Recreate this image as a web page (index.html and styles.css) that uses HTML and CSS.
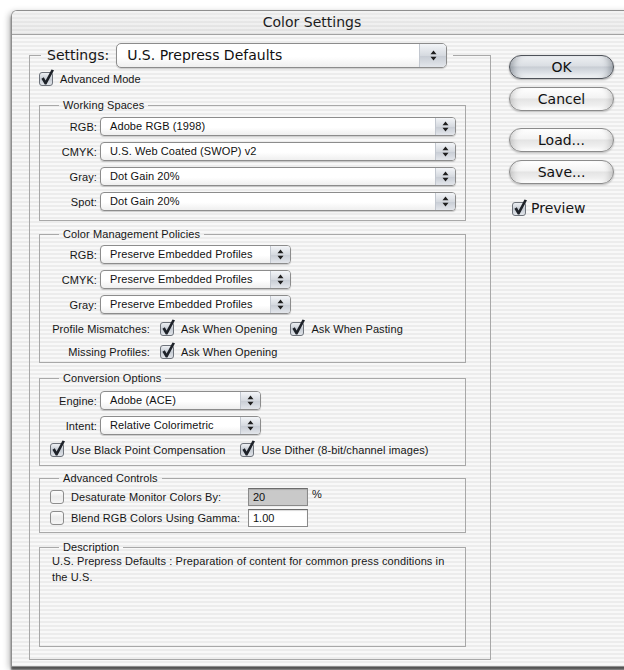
FILE: index.html
```html
<!DOCTYPE html>
<html lang="en">
<head>
<meta charset="utf-8">
<title>Color Settings</title>
<link rel="stylesheet" href="styles.css">
</head>
<body>
<svg class="defs" width="0" height="0" aria-hidden="true">
  <defs>
    <linearGradient id="cb-on-fill" x1="0" y1="0" x2="0" y2="1">
      <stop offset="0" stop-color="#f1f3f6"/>
      <stop offset="0.5" stop-color="#c6ccd4"/>
      <stop offset="1" stop-color="#e3e6eb"/>
    </linearGradient>
    <linearGradient id="cb-off-fill" x1="0" y1="0" x2="0" y2="1">
      <stop offset="0" stop-color="#ffffff"/>
      <stop offset="0.5" stop-color="#ebebeb"/>
      <stop offset="1" stop-color="#f7f7f7"/>
    </linearGradient>
    <symbol id="cb-on" viewBox="0 0 16 17">
      <rect x="0.5" y="3.5" width="13" height="13" rx="2.5" fill="url(#cb-on-fill)" stroke="#6e737b"/>
      <path d="M2.4 9.8 4.8 8.3 6.6 11.6 12.5 0.5 15 1.3 7.4 15.4 5.8 15.4Z" fill="#1e2229"/>
    </symbol>
    <symbol id="cb-off" viewBox="0 0 16 17">
      <rect x="0.5" y="3.5" width="13" height="13" rx="2.5" fill="url(#cb-off-fill)" stroke="#8d8d8d"/>
    </symbol>
    <symbol id="updown" viewBox="0 0 7 11">
      <path d="M3.5 0.5 6.5 4.3H0.5Z M3.5 10.5 6.5 6.7H0.5Z" fill="#1f1f1f"/>
    </symbol>
  </defs>
</svg>

<div class="window">
  <header class="titlebar"><h1 class="title">Color Settings</h1></header>

  <div class="content">
    <fieldset class="settings">
      <legend class="settings-legend">
        <span class="settings-label">Settings:</span>
        <span class="popup popup-large"><span class="popup-text">U.S. Prepress Defaults</span><span class="popup-arrows"><svg class="updown"><use href="#updown"/></svg></span></span>
      </legend>

      <label class="check advanced-mode"><svg class="cb"><use href="#cb-on"/></svg><span>Advanced Mode</span></label>

      <fieldset class="group working-spaces">
        <legend>Working Spaces</legend>
        <div class="field-grid">
          <span class="field-label">RGB:</span>
          <span class="popup popup-wide"><span class="popup-text">Adobe RGB (1998)</span><span class="popup-arrows"><svg class="updown"><use href="#updown"/></svg></span></span>
          <span class="field-label">CMYK:</span>
          <span class="popup popup-wide"><span class="popup-text">U.S. Web Coated (SWOP) v2</span><span class="popup-arrows"><svg class="updown"><use href="#updown"/></svg></span></span>
          <span class="field-label">Gray:</span>
          <span class="popup popup-wide"><span class="popup-text">Dot Gain 20%</span><span class="popup-arrows"><svg class="updown"><use href="#updown"/></svg></span></span>
          <span class="field-label">Spot:</span>
          <span class="popup popup-wide"><span class="popup-text">Dot Gain 20%</span><span class="popup-arrows"><svg class="updown"><use href="#updown"/></svg></span></span>
        </div>
      </fieldset>

      <fieldset class="group policies">
        <legend>Color Management Policies</legend>
        <div class="field-grid">
          <span class="field-label">RGB:</span>
          <span class="popup popup-policy"><span class="popup-text">Preserve Embedded Profiles</span><span class="popup-arrows"><svg class="updown"><use href="#updown"/></svg></span></span>
          <span class="field-label">CMYK:</span>
          <span class="popup popup-policy"><span class="popup-text">Preserve Embedded Profiles</span><span class="popup-arrows"><svg class="updown"><use href="#updown"/></svg></span></span>
          <span class="field-label">Gray:</span>
          <span class="popup popup-policy"><span class="popup-text">Preserve Embedded Profiles</span><span class="popup-arrows"><svg class="updown"><use href="#updown"/></svg></span></span>
        </div>
        <div class="policy-row policy-mismatch">
          <span class="field-label">Profile Mismatches:</span>
          <label class="check"><svg class="cb"><use href="#cb-on"/></svg><span>Ask When Opening</span></label>
          <label class="check"><svg class="cb"><use href="#cb-on"/></svg><span>Ask When Pasting</span></label>
        </div>
        <div class="policy-row policy-missing">
          <span class="field-label">Missing Profiles:</span>
          <label class="check"><svg class="cb"><use href="#cb-on"/></svg><span>Ask When Opening</span></label>
        </div>
      </fieldset>

      <fieldset class="group conversion">
        <legend>Conversion Options</legend>
        <div class="field-grid">
          <span class="field-label">Engine:</span>
          <span class="popup popup-engine"><span class="popup-text">Adobe (ACE)</span><span class="popup-arrows"><svg class="updown"><use href="#updown"/></svg></span></span>
          <span class="field-label">Intent:</span>
          <span class="popup popup-engine"><span class="popup-text">Relative Colorimetric</span><span class="popup-arrows"><svg class="updown"><use href="#updown"/></svg></span></span>
        </div>
        <div class="check-row">
          <label class="check"><svg class="cb"><use href="#cb-on"/></svg><span>Use Black Point Compensation</span></label>
          <label class="check"><svg class="cb"><use href="#cb-on"/></svg><span>Use Dither (8-bit/channel images)</span></label>
        </div>
      </fieldset>

      <fieldset class="group advanced-controls">
        <legend>Advanced Controls</legend>
        <div class="control-row">
          <label class="check"><svg class="cb"><use href="#cb-off"/></svg><span>Desaturate Monitor Colors By:</span></label>
          <input class="field field-disabled" type="text" value="20" readonly>
          <span class="unit">%</span>
        </div>
        <div class="control-row">
          <label class="check"><svg class="cb"><use href="#cb-off"/></svg><span>Blend RGB Colors Using Gamma:</span></label>
          <input class="field" type="text" value="1.00" readonly>
        </div>
      </fieldset>

      <fieldset class="group description">
        <legend>Description</legend>
        <p>U.S. Prepress Defaults : Preparation of content for common press conditions in the U.S.</p>
      </fieldset>
    </fieldset>

    <div class="side">
      <button class="aqua aqua-default" type="button">OK</button>
      <button class="aqua btn-cancel" type="button">Cancel</button>
      <button class="aqua btn-load" type="button">Load...</button>
      <button class="aqua btn-save" type="button">Save...</button>
      <label class="check preview"><svg class="cb"><use href="#cb-on"/></svg><span>Preview</span></label>
    </div>
  </div>
</div>
</body>
</html>
```

FILE: styles.css
```css
* { box-sizing: border-box; }

html, body { margin: 0; }

body {
  width: 624px;
  height: 670px;
  overflow: hidden;
  background: #fff;
  font-family: "Liberation Sans", Arial, sans-serif;
  font-size: 11px;
  letter-spacing: 0.1px;
  color: #161616;
}

.defs { display: block; width: 0; height: 0; overflow: hidden; }

/* ---------- window frame ---------- */
.window {
  margin: 10px 0 0 11px;
  width: 640px;
  height: 657px;
  border: 1px solid #8e8e8e;
  border-right: none;
  border-radius: 6px 0 0 0;
  background: repeating-linear-gradient(180deg, #f8f8f8 0 2px, #ececec 2px 4px);
  box-shadow: -2px 2px 6px rgba(0, 0, 0, 0.28), 0 3px 2px rgba(0, 0, 0, 0.6);
  overflow: hidden;
}

.titlebar {
  height: 24px;
  border-bottom: 1px solid #a2a2a2;
  background:
    linear-gradient(rgba(255, 255, 255, 0.35), rgba(255, 255, 255, 0)),
    repeating-linear-gradient(180deg, #ededed 0 2px, #e1e1e1 2px 4px);
}

.title {
  margin: 0;
  width: 600px;
  font: 400 14px/23px "DejaVu Sans", sans-serif;
  letter-spacing: 0;
  text-align: center;
  color: #1d1d1d;
}

.content {
  display: flex;
  align-items: flex-start;
  padding-left: 17px;
}

/* ---------- group boxes ---------- */
fieldset {
  margin: 0;
  padding: 0;
  border: 1px solid #a8a8a8;
  min-width: 0;
}

legend {
  padding: 0 4px;
  margin-left: 19px;
  line-height: 12px;
}

.settings {
  width: 462px;
  margin-top: 8px;
  padding: 3px 0 12px 0;
}

.settings > .check,
.settings > .group { margin-left: 9px; }

.settings-legend {
  display: flex;
  align-items: center;
  gap: 7px;
  height: 25px;
  margin-left: 11px;
  padding: 0 6px;
}

.settings-label {
  font: 14px/17px "DejaVu Sans", sans-serif;
  letter-spacing: 0;
}

.group { width: 427px; }

.working-spaces { margin-top: 12px; padding: 6px 0 9px; }
.policies { margin-top: 7px; padding: 5px 0 1px; }
.conversion { margin-top: 9px; padding: 7px 0 7px; }
.advanced-controls { margin-top: 6px; padding: 4px 0 5px; }
.description { margin-top: 8px; }

.field-grid {
  display: grid;
  grid-template-columns: 57px auto;
  column-gap: 3px;
  row-gap: 6px;
  align-items: center;
  justify-items: start;
}

.field-label { text-align: right; white-space: nowrap; }
.field-grid .field-label { justify-self: end; }

/* ---------- popup menus ---------- */
.popup {
  display: flex;
  height: 19px;
  border: 1px solid #8c8c8c;
  border-radius: 4px;
  background: linear-gradient(#ffffff 0, #ffffff 55%, #efefef 100%);
  box-shadow: 0 1px 1px rgba(0, 0, 0, 0.18);
  overflow: hidden;
  color: #111;
}

.popup-text {
  flex: 1;
  padding-left: 9px;
  line-height: 17px;
  white-space: nowrap;
}

.popup-arrows {
  flex: none;
  width: 20px;
  display: flex;
  align-items: center;
  justify-content: center;
  border-left: 1px solid #c2c7cf;
  background: linear-gradient(#f3f5f8, #d6dae0 50%, #c7ccd4 51%, #e3e6eb);
}

.updown { width: 7px; height: 11px; }

.popup-large {
  width: 331px;
  height: 25px;
  border-radius: 5px;
  font: 14px/23px "DejaVu Sans", sans-serif;
  letter-spacing: 0;
}

.popup-large .popup-text { padding-left: 10px; line-height: 23px; }
.popup-large .popup-arrows { width: 27px; }

.popup-wide { width: 356px; }
.popup-policy { width: 191px; }
.popup-engine { width: 161px; }

/* ---------- checkboxes ---------- */
.check {
  display: flex;
  align-items: center;
  gap: 5px;
  white-space: nowrap;
}

.cb {
  flex: none;
  width: 16px;
  height: 17px;
  margin-top: -3px;
}

.advanced-mode { height: 16px; }

.policy-row {
  display: flex;
  align-items: center;
  height: 18px;
}

.policy-row .field-label { width: 110px; margin-right: 10px; }
.policy-row .check + .check { margin-left: 13px; }
.policy-mismatch { margin-top: 6px; }
.policy-missing { margin-top: 5px; }

.check-row {
  display: flex;
  align-items: center;
  gap: 15px;
  height: 16px;
  margin-top: 7px;
  padding-left: 10px;
}

/* ---------- advanced controls ---------- */
.control-row {
  display: flex;
  align-items: center;
  height: 18px;
  padding-left: 10px;
}

.control-row + .control-row { margin-top: 3px; }
.control-row .check { width: 198px; }

.field {
  width: 60px;
  height: 18px;
  margin: 0;
  padding: 0 4px;
  border: 1px solid #8a8a8a;
  border-top-color: #6c6c6c;
  border-radius: 0;
  background: #fff;
  box-shadow: inset 0 1px 1px rgba(0, 0, 0, 0.15);
  font: inherit;
  color: #111;
  outline: none;
}

.field-disabled { background: #c9c9c9; }

.unit { margin-left: 4px; align-self: flex-start; line-height: 12px; }

/* ---------- description ---------- */
.description p {
  margin: 0;
  height: 93px;
  padding: 0 8px 0 12px;
  line-height: 16px;
  letter-spacing: 0.1px;
}

/* ---------- push buttons ---------- */
.side {
  display: flex;
  flex-direction: column;
  width: 105px;
  margin-left: 18px;
  margin-top: 20px;
}

.aqua {
  width: 105px;
  height: 24px;
  padding: 0;
  border: 1px solid #8b8b8b;
  border-radius: 12px;
  background: linear-gradient(#ffffff 0%, #f3f3f3 45%, #e4e4e4 50%, #efefef 78%, #ffffff 100%);
  box-shadow: 0 1px 2px rgba(0, 0, 0, 0.25),
    inset 7px 0 6px -5px rgba(0, 0, 0, 0.18),
    inset -7px 0 6px -5px rgba(0, 0, 0, 0.18);
  font: 14px/22px "DejaVu Sans", sans-serif;
  color: #111;
}

.aqua-default {
  border-color: #4f535a;
  background: linear-gradient(#eef0f3 0%, #dadee3 45%, #c8cdd4 50%, #dfe3e8 78%, #f3f5f7 100%);
  box-shadow: 0 1px 2px rgba(0, 0, 0, 0.3),
    inset 8px 0 6px -5px rgba(40, 50, 60, 0.35),
    inset -8px 0 6px -5px rgba(40, 50, 60, 0.35);
}

.btn-cancel { margin-top: 8px; }
.btn-load { margin-top: 17px; }
.btn-save { margin-top: 8px; }

.preview {
  margin-top: 16px;
  margin-left: 3px;
  gap: 3px;
  font: 14px/17px "DejaVu Sans", sans-serif;
  letter-spacing: 0;
}
```
